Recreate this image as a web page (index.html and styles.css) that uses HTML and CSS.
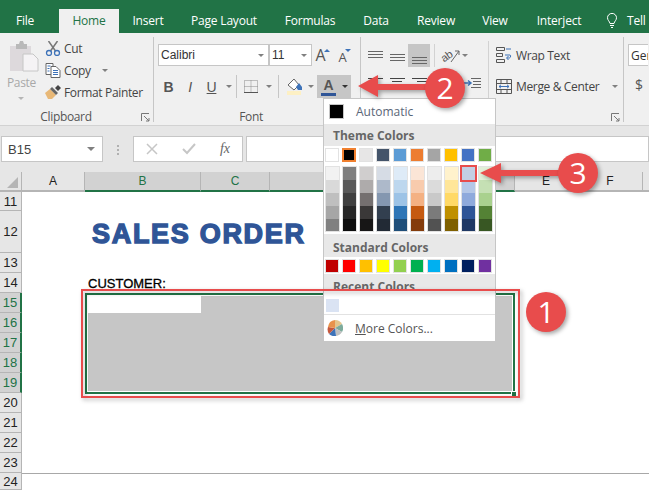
FILE: index.html
```html
<!DOCTYPE html>
<html lang="en">
<head>
	<meta charset="UTF-8">
	<title>Sales order</title>
	<link rel="stylesheet" href="styles.css">
</head>
<body>
<div class="page">
	<div class="tabs">
		<span class="tab t-file">File</span>
		<span class="tab t-home">Home</span>
		<span class="tab t-insert">Insert</span>
		<span class="tab t-layout">Page Layout</span>
		<span class="tab t-formulas">Formulas</span>
		<span class="tab t-data">Data</span>
		<span class="tab t-review">Review</span>
		<span class="tab t-view">View</span>
		<span class="tab t-inter">Interject</span>
		<svg class="bulb" width="10" height="15" viewBox="0 0 10 15"><path d="M3 10.500C2.500 8 .5 7.500.5 4.700a4.500 4.300 0 0 1 9 0C9.500 7.500 7.500 8 7 10.500zM3 12.500h4M4 14.500h2" fill="none" stroke="#fff"/></svg>
		<span class="tab t-tell">Tell</span>
	</div>

	<div class="ribbon">
		<div class="group g-clip">
			<div class="clip-body">
				<div class="paste">
					<svg width="30" height="31" viewBox="0 0 30 31"><path d="M1 5h21v25H1z" fill="#ddd9dc"/><path d="M7 3h3l1-3h3l1 3h3v5H7z" fill="#b9b9b9"/><path d="M14 13h10l5 5v12H14z" fill="#f5f3f5" stroke="#c6c6c6"/></svg>
					<span class="paste-text">Paste</span>
					<i class="caret caret-light"></i>
				</div>
				<div class="clip-list">
					<div class="clip-row">
						<svg width="15" height="15" viewBox="0 0 15 15"><path d="M3 0l7 10M12 0L5 10" stroke="#777" stroke-width="1.500"/><circle cx="3.500" cy="12" r="2.500" fill="none" stroke="#3d72b8" stroke-width="1.300"/><circle cx="11.500" cy="12" r="2.500" fill="none" stroke="#3d72b8" stroke-width="1.300"/></svg>
						<span>Cut</span>
					</div>
					<div class="clip-row">
						<svg width="15" height="15" viewBox="0 0 15 15"><path d="M.5.500h7v11h-7z" fill="#fff" stroke="#666"/><path d="M5.500 3.500h5l4 4v7h-9z" fill="#fff" stroke="#666"/><path d="M2 3h3M2 5.500h2M2 8h2M7.500 7.500h5M7.500 9.500h5M7.500 11.500h5" stroke="#3d72b8"/></svg>
						<span>Copy</span>
						<i class="caret copy-caret"></i>
					</div>
					<div class="clip-row">
						<svg width="16" height="14" viewBox="0 0 16 14"><path d="M0 8l5-4 6 6-4 4H3z" fill="#e8b877"/><path d="M5 4l2-2 6 6-2 2z" fill="#666"/><path d="M10 3l3-3 3 3-3 3z" fill="#444"/></svg>
						<span>Format Painter</span>
					</div>
				</div>
			</div>
			<div class="group-foot">
				<span class="group-label">Clipboard</span>
				<svg class="launcher" width="9" height="9" viewBox="0 0 9 9"><path d="M.5 8V.500H8M3 3l5 5M8 5v3H5" fill="none" stroke="#777"/></svg>
			</div>
		</div>

		<div class="group g-font">
			<div class="font-top">
				<span class="combo combo-name">Calibri<i class="caret"></i></span>
				<span class="combo combo-size">11<i class="caret"></i></span>
				<span class="grow"><b>A</b><i class="tri"></i></span>
				<span class="grow shrink"><b>A</b><i class="tri tri-down"></i></span>
			</div>
			<div class="font-tools">
				<span class="tool t-b">B</span>
				<span class="tool t-i">I</span>
				<span class="tool t-u">U</span>
				<i class="caret font-caret"></i>
				<i class="sep sep-1"></i>
				<span class="tool t-border">
					<svg width="14" height="13" viewBox="0 0 14 13"><path d="M.5.500h13v12h-13zM7 .5v12M.5 6.500h13" fill="none" stroke="#8a8a8a" stroke-dasharray="1 1"/><path d="M0 12.500h14" stroke="#555"/></svg>
				</span>
				<i class="caret border-caret"></i>
				<i class="sep sep-2"></i>
				<span class="tool t-fill">
					<svg width="16" height="17" viewBox="0 0 16 17"><path d="M0 13h14v4H0z" fill="#fdf0c4"/><path d="M1 7l6-6 5 6-5 5z" fill="#fff" stroke="#666"/><path d="M12 5l3 4v3h-4l-2-3z" fill="#3d72b8"/></svg>
				</span>
				<i class="caret fill-caret"></i>
				<span class="color-btn">
					<span class="color-a">A</span>
					<i class="caret caret-dark"></i>
				</span>
			</div>
			<div class="group-foot font-foot"><span class="group-label">Font</span></div>
		</div>

		<div class="group g-align">
			<div class="align-body">
				<div class="align-left">
					<div class="align-row">
						<svg class="al" width="15" height="14" viewBox="0 0 15 14"><path d="M0 2.500h15M0 5.500h15M0 8.500h15" stroke="#666"/></svg>
						<svg class="al al-mid" width="15" height="14" viewBox="0 0 15 14"><path d="M0 5.500h15M0 8.500h15M0 11.500h15" stroke="#666"/></svg>
						<span class="al-on"><svg width="15" height="10" viewBox="0 0 15 10"><path d="M0 3.500h15M0 6.500h15M0 9.500h15" stroke="#666"/></svg></span>
						<i class="sep sep-3"></i>
						<svg class="orient" width="18" height="16" viewBox="0 0 18 16"><text x="0" y="12" transform="rotate(-35 5 10)" class="orient-text">ab</text><path d="M9 14L17 3M13 3h4v4" fill="none" stroke="#666"/></svg>
						<i class="caret orient-caret"></i>
					</div>
					<div class="align-row align-row-2">
						<svg class="al" width="15" height="12" viewBox="0 0 15 12"><path d="M0 .5h15M0 3.500h10M0 6.500h15M0 9.500h10" stroke="#444"/></svg>
						<svg class="al al-mid" width="15" height="12" viewBox="0 0 15 12"><path d="M0 .5h15M2 3.500h10M0 6.500h15M2 9.500h10" stroke="#444"/></svg>
						<svg class="al al-third" width="15" height="12" viewBox="0 0 15 12"><path d="M0 .5h15M5 3.500h10M0 6.500h15M5 9.500h10" stroke="#444"/></svg>
						<svg class="indent" width="17" height="12" viewBox="0 0 17 12"><path d="M7 .5h10M9 3.500h8M9 6.500h8M7 9.500h10" stroke="#666"/><path d="M0 5h6M4 2.500L7 5 4 7.500" fill="none" stroke="#3d72b8" stroke-width="1.500"/></svg>
					</div>
				</div>
				<div class="align-right">
					<div class="wrap-row">
						<svg width="16" height="16" viewBox="0 0 16 16"><path d="M.5.500h8v3h-8zM.5 6.500h6v3h-6zM.5 12.500h8v3h-8z" fill="none" stroke="#555"/><path d="M10 2h5M9 8h5c1 0 1 3-1 3h-2M12.500 9L10.500 11l2 2" fill="none" stroke="#3d72b8"/></svg>
						<span>Wrap Text</span>
					</div>
					<div class="wrap-row">
						<svg width="16" height="15" viewBox="0 0 16 15"><path d="M.5.500h15v14H.5zM.5 4.500h15M.5 10.500h15M5 .5v4M11 .5v4M5 10.500v4M11 10.500v4" fill="none" stroke="#555"/><path d="M3 7.500h10M5 5.800L3 7.500l2 1.700M11 5.800l2 1.700-2 1.700" fill="none" stroke="#3d72b8"/></svg>
						<span>Merge &amp; Center</span>
						<i class="caret merge-caret"></i>
					</div>
				</div>
			</div>
			<div class="group-foot align-foot">
				<span class="group-label">Alignment</span>
				<svg class="launcher" width="9" height="9" viewBox="0 0 9 9"><path d="M.5 8V.500H8M3 3l5 5M8 5v3H5" fill="none" stroke="#777"/></svg>
			</div>
		</div>

		<div class="group g-num">
			<span class="combo combo-num">General</span>
			<span class="dollar">$</span>
		</div>
	</div>

	<div class="formula-bar">
		<span class="name-box">B15<i class="caret"></i></span>
		<span class="grip"></span>
		<span class="fx-box">
			<svg width="12" height="12" viewBox="0 0 12 12"><path d="M1 1l10 10M11 1L1 11" stroke="#c6c6c6" stroke-width="1.500"/></svg>
			<svg width="14" height="12" viewBox="0 0 14 12"><path d="M1 6l4 4 8-9" fill="none" stroke="#c6c6c6" stroke-width="2"/></svg>
			<span class="fx">fx</span>
		</span>
		<span class="formula-input"></span>
	</div>

	<div class="col-heads">
		<span class="corner"><i></i></span>
		<span class="col c-a">A</span>
		<span class="col c-b on">B</span>
		<span class="col c-c on">C</span>
		<span class="col c-d on">D</span>
		<span class="col c-e">E</span>
		<span class="col c-f">F</span>
		<span class="col c-g"></span>
	</div>

	<div class="sheet">
		<span class="row-num">11</span>
		<span class="row-num">12</span>
		<span class="row-num">13</span>
		<span class="row-num">14</span>
		<span class="row-num on">15</span>
		<span class="row-num on">16</span>
		<span class="row-num on">17</span>
		<span class="row-num on">18</span>
		<span class="row-num on">19</span>
		<span class="row-num">20</span>
		<span class="row-num">21</span>
		<span class="row-num">22</span>
		<span class="row-num">23</span>
		<span class="row-num">24</span>
		<h1 class="title">SALES ORDER</h1>
		<div class="customer">CUSTOMER:</div>
		<div class="selection"><div class="sel-cell"></div><i class="handle"></i></div>
		<div class="last-row"></div>
	</div>

	<!-- colour menu -->
	<div class="menu">
		<div class="auto-row"><i class="auto-swatch"></i><span>Automatic</span></div>
		<div class="menu-head">Theme Colors</div>
		<div class="swatches">
			<i style="background:#ffffff"></i><i class="picked" style="background:#000000"></i><i style="background:#e7e6e6"></i><i style="background:#44546a"></i><i style="background:#5b9bd5"></i><i style="background:#ed7d31"></i><i style="background:#a5a5a5"></i><i style="background:#ffc000"></i><i style="background:#4472c4"></i><i style="background:#70ad47"></i>
		</div>
		<div class="shades">
			<div class="shade"><i style="background:#f2f2f2"></i><i style="background:#d9d9d9"></i><i style="background:#bfbfbf"></i><i style="background:#a6a6a6"></i><i style="background:#808080"></i></div>
			<div class="shade"><i style="background:#7f7f7f"></i><i style="background:#595959"></i><i style="background:#3f3f3f"></i><i style="background:#262626"></i><i style="background:#0d0d0d"></i></div>
			<div class="shade"><i style="background:#d0cece"></i><i style="background:#aeabab"></i><i style="background:#757070"></i><i style="background:#3a3838"></i><i style="background:#171616"></i></div>
			<div class="shade"><i style="background:#d6dce5"></i><i style="background:#adb9ca"></i><i style="background:#8497b0"></i><i style="background:#323f4f"></i><i style="background:#222a35"></i></div>
			<div class="shade"><i style="background:#deebf7"></i><i style="background:#bdd7ee"></i><i style="background:#9dc3e6"></i><i style="background:#2e75b6"></i><i style="background:#1f4e79"></i></div>
			<div class="shade"><i style="background:#fbe5d6"></i><i style="background:#f8cbad"></i><i style="background:#f4b183"></i><i style="background:#c55a11"></i><i style="background:#843c0c"></i></div>
			<div class="shade"><i style="background:#ededed"></i><i style="background:#dbdbdb"></i><i style="background:#c9c9c9"></i><i style="background:#7b7b7b"></i><i style="background:#525252"></i></div>
			<div class="shade"><i style="background:#fff2cc"></i><i style="background:#ffe699"></i><i style="background:#ffd966"></i><i style="background:#bf9000"></i><i style="background:#7f6000"></i></div>
			<div class="shade"><i class="shade-hit" style="background:#c3cfe4"></i><i style="background:#b4c7e7"></i><i style="background:#8faadc"></i><i style="background:#2f5597"></i><i style="background:#1f3864"></i></div>
			<div class="shade"><i style="background:#e2f0d9"></i><i style="background:#c5e0b4"></i><i style="background:#a9d18e"></i><i style="background:#548235"></i><i style="background:#385723"></i></div>
		</div>
		<div class="menu-head head-std">Standard Colors</div>
		<div class="swatches">
			<i style="background:#c00000"></i><i style="background:#ff0000"></i><i style="background:#ffc000"></i><i style="background:#ffff00"></i><i style="background:#92d050"></i><i style="background:#00b050"></i><i style="background:#00b0f0"></i><i style="background:#0070c0"></i><i style="background:#002060"></i><i style="background:#7030a0"></i>
		</div>
		<div class="menu-head head-recent"><span>Recent Colors</span></div>
		<div class="recent"><i></i></div>
		<div class="more-row">
			<svg width="16" height="16" viewBox="0 0 16 16"><path d="M8 8V0a8 8 0 0 1 7 4z" fill="#e4c58c"/><path d="M8 8l7-4a8 8 0 0 1 0 8z" fill="#7dab9c"/><path d="M8 8l7 4a8 8 0 0 1-6 4z" fill="#c0c0c0"/><path d="M8 8l1 8a8 8 0 0 1-7-2z" fill="#3d72b8"/><path d="M8 8l-6 6a8 8 0 0 1-1-7z" fill="#c5573c"/><path d="M8 8L1 7a8 8 0 0 1 7-7z" fill="#e8924c"/></svg>
			<span class="more-text"><u>M</u>ore Colors...</span>
		</div>
	</div>

	<!-- callouts drawn on top of the screenshot -->
	<svg class="marks" width="649" height="490" viewBox="0 0 649 490">
		<rect class="mark-box" x="82" y="290" width="437" height="107"/>
		<path class="mark" d="M358 86L378 75V84H430V90H378V97Z"/>
		<path class="mark" d="M480 173L501 163V170H565V176H501V183Z"/>
		<circle class="mark" cx="445" cy="88" r="20"/>
		<circle class="mark" cx="578" cy="173" r="20"/>
		<circle class="mark" cx="546" cy="312" r="20"/>
		<text class="mark-num" x="445" y="99">2</text>
		<text class="mark-num" x="578" y="184">3</text>
		<text class="mark-num" x="546" y="323">1</text>
	</svg>
</div>
</body>
</html>
```

FILE: styles.css
```css
*{margin:0;padding:0;box-sizing:border-box;}
body{background:#fff;font-family:"Open Sans","Noto Sans",sans-serif;font-size:12px;color:#444;}
i{display:block;}
.page{width:649px;height:490px;position:relative;overflow:hidden;display:flex;flex-direction:column;}

/* tabs */
.tabs{height:33px;background:#217346;display:flex;align-items:flex-end;flex:none;}
.tab{color:#fff;font-size:12px;letter-spacing:-.2px;height:24px;line-height:24px;text-align:center;flex:none;}
.t-file{width:50px;margin-right:9px;}
.t-home{width:60px;background:#f0f0f0;color:#217346;}
.t-insert{width:58px;}
.t-layout{width:94px;}
.t-formulas{width:78px;}
.t-data{width:54px;}
.t-review{width:66px;}
.t-view{width:52px;}
.t-inter{width:76px;}
.t-tell{width:34px;text-align:left;margin-left:10px;}
.bulb{flex:none;margin:0 0 5px 10px;}

/* ribbon */
.ribbon{height:93px;background:#f0f0f0;border-bottom:1px solid #d2d2d2;display:flex;flex:none;letter-spacing:-.35px;}
.group{display:flex;flex-direction:column;position:relative;flex:none;}
.group-foot{display:flex;align-items:center;height:18px;margin-top:auto;margin-bottom:-4px;}
.group-label{flex:1;text-align:center;color:#555;line-height:18px;}
.launcher{margin:0 3px 0 9px;flex:none;}
.caret{width:0;height:0;border:3px solid transparent;border-top:3px solid #808080;border-bottom:0;flex:none;}
.caret-light{border-top-color:#b5b5b5;}
.caret-dark{border-top-color:#333;}
.sep{width:1px;height:23px;background:#c6c6c6;flex:none;}

.g-clip{width:154px;border-right:1px solid #c6c6c6;margin-top:4px;height:85px;}
.clip-body{display:flex;height:66px;}
.paste{width:45px;padding-left:9px;display:flex;flex-direction:column;align-items:flex-start;}
.paste svg{margin-top:4px;}
.paste-text{color:#a8a8a8;margin-top:3px;margin-left:-2px;line-height:16px;}
.paste .caret{margin:6px 0 0 9px;}
.clip-list{display:flex;flex-direction:column;}
.clip-row{height:23px;display:flex;align-items:center;gap:3px;color:#444;white-space:nowrap;}
.clip-row svg{width:16px;flex:none;}
.copy-caret{margin-left:8px;}

.g-font{width:207px;border-right:1px solid #c6c6c6;margin-top:4px;height:85px;padding:7px 0 0 4px;}
.font-top{display:flex;height:22px;}
.combo{height:22px;border:1px solid #c6c6c6;background:#fff;display:flex;align-items:center;justify-content:space-between;padding:0 4px 0 2px;color:#333;font-family:"Liberation Sans",sans-serif;font-size:12px;letter-spacing:0;flex:none;}
.combo-name{width:111px;}
.combo-size{width:43px;}
.grow{width:22px;position:relative;display:flex;justify-content:center;align-items:center;color:#555;}
.grow b{font-size:16px;font-weight:400;}
.grow.shrink b{font-size:13px;padding-top:4px;}
.tri{width:0;height:0;border:3px solid transparent;border-bottom:3px solid #3d72b8;border-top:0;margin:-10px 0 0 -1px;}
.tri-down{border-bottom:0;border-top:3px solid #3d72b8;}
.font-tools{display:flex;align-items:center;height:23px;margin-top:9px;}
.tool{display:flex;justify-content:center;align-items:center;height:23px;flex:none;color:#555;font-family:"Liberation Sans",sans-serif;font-size:14px;}
.t-b{width:21px;font-weight:700;}
.t-i{width:22px;font-style:italic;}
.t-u{width:21px;text-decoration:underline;}
.font-caret{margin-left:4px;}
.sep-1{margin-left:4px;}
.t-border{width:28px;}
.border-caret{margin:0 6px 0 1px;}
.t-fill{width:27px;margin-left:2px;}
.fill-caret{margin-left:0;}
.color-btn{width:34px;height:23px;margin-left:3px;background:#c6c6c6;display:flex;align-items:center;gap:6px;padding-left:4px;flex:none;}
.color-a{width:15px;height:19px;border-bottom:3px solid #2f5597;color:#555;font-family:"Liberation Sans",sans-serif;font-size:14px;font-weight:700;text-align:center;line-height:16px;}
.font-foot{padding-right:16px;}

.g-align{width:263px;border-right:1px solid #c6c6c6;margin-top:4px;height:85px;}
.align-body{display:flex;padding-top:7px;height:66px;}
.align-left{width:127px;padding-left:7px;}
.align-row{display:flex;align-items:center;height:23px;}
.align-row-2{margin-top:9px;height:16px;}
.al{flex:none;}
.al-mid{margin-left:7px;}
.al-third{margin-left:7px;}
.al-on{width:22px;height:23px;background:#c6c6c6;margin-left:3px;display:flex;align-items:flex-end;justify-content:center;padding-bottom:3px;flex:none;}
.sep-3{margin-left:4px;background:#d2d2d2;}
.orient{margin-left:7px;flex:none;overflow:visible;}
.orient-text{font-family:"Liberation Sans",sans-serif;font-size:11px;fill:#555;}
.orient-caret{margin-left:2px;}
.indent{margin-left:37px;flex:none;}
.align-right{border-left:1px solid #d2d2d2;margin-top:-3px;height:70px;padding:6px 0 0 7px;}
.wrap-row{height:16px;display:flex;align-items:center;gap:4px;white-space:nowrap;margin-bottom:15px;color:#444;}
.wrap-row svg{flex:none;}
.merge-caret{margin-left:9px;}
.align-foot .group-label{margin-right:41px;}
.align-foot .launcher{margin-left:0;}

.g-num{width:24px;padding:11px 0 0 4px;overflow:hidden;}
.combo-num{width:60px;font-family:"Open Sans",sans-serif;justify-content:flex-start;}
.dollar{margin:9px 0 0 7px;font-size:14px;color:#555;}

/* formula bar */
.formula-bar{height:46px;background:#e6e6e6;display:flex;align-items:flex-start;padding:10px 0 0 1px;flex:none;}
.name-box{width:102px;height:26px;background:#fff;border:1px solid #c6c6c6;display:flex;align-items:center;justify-content:space-between;padding:0 7px 0 6px;font-family:"Liberation Sans",sans-serif;font-size:13px;color:#444;flex:none;}
.name-box .caret{border-width:4px 4px 0;}
.grip{width:2px;height:10px;margin:9px 14px 0 14px;border-left:2px dotted #b0b0b0;flex:none;}
.fx-box{width:110px;height:26px;background:#fff;border:1px solid #c6c6c6;display:flex;align-items:center;justify-content:space-between;padding:0 12px;flex:none;}
.fx{font-family:"Liberation Serif",serif;font-style:italic;font-size:14px;color:#666;}
.formula-input{height:26px;flex:1;margin-left:3px;background:#fff;border:1px solid #c6c6c6;}

/* sheet */
.col-heads{height:20px;display:flex;background:#e6e6e6;flex:none;}
.corner{width:22px;border-right:1px solid #b5b5b5;border-bottom:2px solid #b5b5b5;position:relative;flex:none;padding:5px 0 0 7px;}
.corner i{width:0;height:0;border-style:solid;border-width:0 0 11px 11px;border-color:transparent transparent #b5b5b5 transparent;}
.col{height:20px;line-height:18px;text-align:center;font-family:"Liberation Sans",sans-serif;font-size:12px;color:#222;border-right:1px solid #b5b5b5;border-bottom:2px solid #b5b5b5;flex:none;}
.col.on{background:#d2d2d2;color:#217346;border-bottom-color:#217346;}
.c-a{width:63px;}
.c-b{width:116px;}
.c-c{width:69px;}
.c-d{width:245px;}
.c-e{width:63px;}
.c-f{width:65px;}
.c-g{width:6px;border-right:0;}

.sheet{flex:1;display:grid;grid-template-columns:22px 1fr;grid-template-rows:19px 42px 20px 20px 20px 20px 20px 20px 20px 20px 20px 20px 20px 17px;background:#fff;}
.row-num{grid-column:1;background:#e6e6e6;border-right:1px solid #b5b5b5;border-bottom:1px solid #b5b5b5;font-family:"Liberation Sans",sans-serif;font-size:13px;color:#222;display:flex;align-items:center;justify-content:center;}
.row-num.on{background:#d2d2d2;color:#217346;border-right:2px solid #217346;}
.title{grid-column:2;grid-row:2;margin:3px 0 0 70px;align-self:center;font-family:"Liberation Sans",sans-serif;font-size:27px;font-weight:700;color:#2f5597;letter-spacing:1.700px;-webkit-text-stroke:1.400px #2f5597;line-height:42px;white-space:nowrap;}
.customer{grid-column:2;grid-row:4;margin-left:66px;font-family:"Liberation Sans",sans-serif;font-size:13px;color:#000;-webkit-text-stroke:.3px #000;line-height:22px;}
.selection{grid-column:2;grid-row:5 / span 5;margin-left:63px;width:430px;height:101px;border:2px solid #217346;background:#c6c6c6;box-shadow:inset 0 0 0 1px #fff;position:relative;}
.sel-cell{width:114px;height:18px;background:#fff;}
.handle{position:absolute;right:-4px;bottom:-5px;width:6px;height:6px;background:#217346;border:1px solid #fff;}
.last-row{grid-column:2;grid-row:14;border-top:1px solid #a8a8a8;}

/* colour menu */
.menu{position:absolute;left:323px;top:98px;width:173px;height:244px;background:#fff;border:1px solid #c6c6c6;display:flex;flex-direction:column;}
.auto-row{height:25px;display:flex;align-items:center;gap:12px;padding-left:5px;flex:none;color:#5a6678;}
.auto-swatch{width:15px;height:15px;background:#000;border:1px solid #c6c6c6;}
.menu-head{height:22px;line-height:24px;background:#e8e8e8;font-weight:700;color:#666;padding-left:9px;flex:none;}
.swatches{display:flex;gap:5px;padding:3px 0 0 2px;flex:none;height:17px;}
.swatches i{width:12px;height:12px;outline:1px solid #e2e2e2;flex:none;}
.swatches i.picked{outline:2px solid #f0802f;outline-offset:-1px;}
.shades{display:flex;gap:4px;padding:4px 0 0 2px;flex:none;}
.shade{width:13px;outline:1px solid #e2e2e2;flex:none;}
.shade i{height:13px;}
.shade i:last-child{height:12px;}
.shade-hit{position:relative;outline:2px solid #e84c4c;}
.head-std{margin-top:3px;height:23px;line-height:27px;}
.head-recent{height:15px;overflow:hidden;line-height:26px;}
.recent{height:25px;padding:10px 0 0 2px;flex:none;}
.recent i{width:13px;height:13px;background:#dae3f3;}
.more-row{height:26px;border-top:1px solid #e2e2e2;display:flex;align-items:center;gap:12px;padding-left:3px;color:#555;flex:none;}
.more-text{padding-top:2px;}

/* callouts */
.marks{position:absolute;left:0;top:0;pointer-events:none;}
.mark{fill:#e84c4c;filter:drop-shadow(2px 2px 2px rgba(0,0,0,.35));}
.mark-box{fill:none;stroke:#e84c4c;stroke-width:2;filter:drop-shadow(2px 2px 2px rgba(0,0,0,.3));}
.mark-num{fill:#fff;font-family:"Open Sans",sans-serif;font-size:30px;text-anchor:middle;}
```
